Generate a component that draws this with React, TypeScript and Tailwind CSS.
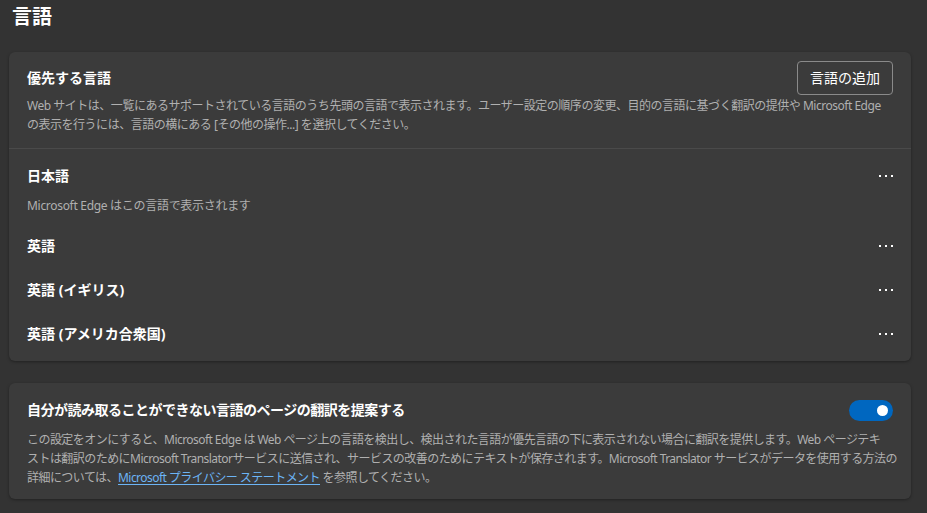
import { ReactNode } from 'react';

const font = {
    fontFamily: '"Noto Sans", "Noto Sans CJK JP", sans-serif',
};

function Dots() {
    return (
        <button className="flex h-6 w-6 items-center justify-end gap-[4px]" aria-label="その他の操作">
            <span className="h-[2px] w-[2px] bg-white" />
            <span className="h-[2px] w-[2px] bg-white" />
            <span className="h-[2px] w-[2px] bg-white" />
        </button>
    );
}

function Card({ children }: { children: ReactNode }) {
    return (
        <section className="rounded-md bg-[#3b3b3b] shadow-[0_1px_3px_rgba(0,0,0,0.35)]">
            {children}
        </section>
    );
}

const langs = ['英語', '英語 (イギリス)', '英語 (アメリカ合衆国)'];

export default function App() {
    return (
        <div
            className="h-[513px] w-[927px] overflow-hidden bg-[#333333] px-[9px] text-white"
            style={font}
        >
            <h1 className="pt-[3px] pl-[3px] text-[20px] font-bold leading-[28px]">言語</h1>

            <div className="mt-[21px] w-[902px]">
                <Card>
                    <div className="px-[18px] pt-[9px] pb-[14px]">
                        <div className="flex items-start justify-between">
                            <h2 className="mt-[7px] text-[14px] font-bold leading-[20px]">優先する言語</h2>
                            <button className="h-[34px] rounded-[4px] border border-[#8a8a8a] px-[12px] text-[14px] leading-[20px]">
                                言語の追加
                            </button>
                        </div>
                        <p className="mt-[1px] whitespace-nowrap text-[12px] leading-[19px] tracking-[-0.48px] text-[#b0b0b0]">
                            Web サイトは、一覧にあるサポートされている言語のうち先頭の言語で表示されます。ユーザー設定の順序の変更、目的の言語に基づく翻訳の提供や Microsoft Edge
                            <br />
                            の表示を行うには、言語の横にある [その他の操作...] を選択してください。
                        </p>
                    </div>
                    <div className="border-t border-[#4a4a4a] px-[18px] pt-[15px] pb-[15px]">
                        <div className="flex items-center justify-between">
                            <span className="text-[14px] font-bold leading-[20px]">日本語</span>
                            <Dots />
                        </div>
                        <p className="mt-[9px] text-[12px] leading-[17px] tracking-[-0.3px] text-[#b0b0b0]">
                            Microsoft Edge はこの言語で表示されます
                        </p>
                        {langs.map((l) => (
                            <div key={l} className="mt-[20px] flex items-center justify-between">
                                <span className="text-[14px] font-bold leading-[24px]">{l}</span>
                                <Dots />
                            </div>
                        ))}
                    </div>
                </Card>

                <div className="mt-[22px]">
                    <Card>
                        <div className="px-[18px] pt-[15px] pb-[12px]">
                            <div className="flex items-center justify-between">
                                <h2 className="text-[14px] font-bold leading-[24px] tracking-[-0.5px]">
                                    自分が読み取ることができない言語のページの翻訳を提案する
                                </h2>
                                <div className="flex h-[21px] w-[44px] items-center justify-end rounded-full bg-[#0067c0] pr-[5px]">
                                    <span className="h-[11px] w-[11px] rounded-full bg-white" />
                                </div>
                            </div>
                            <p className="mt-[8px] whitespace-nowrap text-[12px] leading-[19px] tracking-[-0.55px] text-[#b0b0b0]">
                                この設定をオンにすると、Microsoft Edge は Web ページ上の言語を検出し、検出された言語が優先言語の下に表示されない場合に翻訳を提供します。Web ページテキ
                                <br />
                                ストは翻訳のためにMicrosoft Translatorサービスに送信され、サービスの改善のためにテキストが保存されます。Microsoft Translator サービスがデータを使用する方法の
                                <br />
                                詳細については、
                                <a href="#" className="text-[#6cb4f5] underline underline-offset-2">
                                    Microsoft プライバシー ステートメント
                                </a>{' '}
                                を参照してください。
                            </p>
                        </div>
                    </Card>
                </div>
            </div>
        </div>
    );
}
